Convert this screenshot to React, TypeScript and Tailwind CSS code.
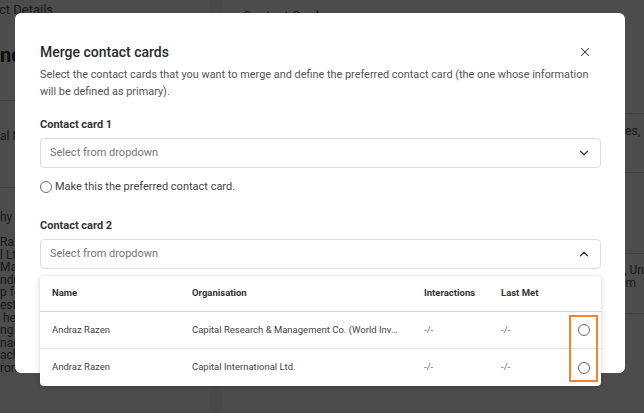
import { X, ChevronDown, ChevronUp } from 'lucide-react';

type Row = {
  name: string;
  organisation: string;
  interactions: string;
  lastMet: string;
};

const ROWS: Row[] = [
  {
    name: 'Andraz Razen',
    organisation: 'Capital Research & Management Co. (World Investors)',
    interactions: '-/-',
    lastMet: '-/-',
  },
  {
    name: 'Andraz Razen',
    organisation: 'Capital International Ltd.',
    interactions: '-/-',
    lastMet: '-/-',
  },
];

const BIO_LINES = ['Razen', 'l Ltd', 'Mark', 'ndu', 'p fo', 'est', ' he', 'ng t', 'nag', 'ach', 'rom Tufts'];

function Radio() {
  return <span className="inline-block h-[12px] w-[12px] shrink-0 rounded-full border-[1.3px] border-[#6b6b6b] bg-white" />;
}

function SelectBox({ open }: { open?: boolean }) {
  return (
    <div className="flex h-[30px] items-center justify-between rounded border border-[#dcdcdc] bg-white pl-[9px] pr-[9px]">
      <span className="text-[11px] text-[#757575]">Select from dropdown</span>
      {open ? (
        <ChevronUp size={14} strokeWidth={2.2} className="text-[#333]" />
      ) : (
        <ChevronDown size={14} strokeWidth={2.2} className="text-[#333]" />
      )}
    </div>
  );
}

function BackgroundPage() {
  return (
    <div className="flex h-full w-full bg-[#f3f3f3] text-[#555]">
      <div className="flex w-[210px] flex-col bg-white">
        <div className="-ml-[1px] h-[26px] text-[13px]">ct Details</div>
        <div className="h-[74px] pt-[14px] text-[20px] font-bold text-[#222]">ndraz Razen</div>
        <div className="h-[87px] border-t border-[#ddd] pt-[26px] text-[12px]">al Name</div>
        <div className="border-t border-[#ddd] pt-[20px]">
          <div className="text-[12px]">hy</div>
          <div className="mt-[10px] flex flex-col text-[12px] leading-[12.6px]">
            {BIO_LINES.map((l, i) => (
              <span key={i} className="whitespace-pre">
                {l}
              </span>
            ))}
          </div>
        </div>
      </div>
      <div className="w-[12px]" />
      <div className="flex flex-1 flex-col bg-white">
        <div className="h-[113px] pl-[21px] pt-[6px] text-[13px]">Contact Cards</div>
        <div className="flex h-[59px] items-center justify-end border-t border-[#ddd] pr-[4px] text-[12px]">
          <span className="mb-[25px]">Titles,</span>
        </div>
        <div className="h-[81px] border-t border-[#ddd]" />
        <div className="flex h-[60px] flex-col items-end border-t border-[#ddd] pt-[10px] text-[12px] leading-[13px]">
          <span>es, Un</span>
          <span className="pr-[8px]">m</span>
        </div>
        <div className="flex-1 border-t border-[#ddd]" />
      </div>
    </div>
  );
}

export default function App() {
  return (
    <div className="relative h-[413px] w-[644px] overflow-hidden font-['Roboto',sans-serif]">
      <BackgroundPage />
      <div className="absolute inset-0 bg-black/70" />

      <div className="absolute left-[15px] top-[13px] h-[360px] w-[610px] rounded-md bg-white pl-[25px] pr-[24px] pt-[29px] text-[#333]">
        <div className="flex items-center justify-between">
          <h2 className="text-[14px] font-medium leading-[20px] text-[#2b2b2b]">Merge contact cards</h2>
          <X size={14} strokeWidth={1.8} className="mr-[9px] text-[#333]" />
        </div>
        <p className="mt-[4px] max-w-[552px] text-[10.9px] leading-[17px] text-[#555]">
          Select the contact cards that you want to merge and define the preferred contact card (the one whose
          information will be defined as primary).
        </p>

        <div className="mt-[17px] text-[11px] font-bold leading-[16px] text-[#333]">Contact card 1</div>
        <div className="mt-[5px]">
          <SelectBox />
        </div>
        <div className="mt-[10px] flex h-[18px] items-center gap-[3px] text-[11px] text-[#444]">
          <Radio />
          <span>Make this the preferred contact card.</span>
        </div>

        <div className="mt-[22px] text-[11px] font-bold leading-[16px] text-[#333]">Contact card 2</div>
        <div className="relative mt-[5px]">
          <SelectBox open />

          <div className="absolute left-0 right-0 top-[37px] z-10 overflow-hidden rounded bg-white shadow-[0_1px_5px_rgba(0,0,0,0.2)]">
            <div className="grid h-[36px] grid-cols-[152px_232px_77px_1fr_38px] items-center border-b border-[#d6d6d6] text-[9.5px] font-bold text-[#333]">
              <span className="pl-[12px]">Name</span>
              <span>Organisation</span>
              <span>Interactions</span>
              <span>Last Met</span>
              <span />
            </div>
            {ROWS.map((row, i) => (
              <div
                key={i}
                className={`grid h-[37px] grid-cols-[152px_232px_77px_1fr_38px] items-center text-[9.5px] text-[#444] ${
                  i < ROWS.length - 1 ? 'border-b border-[#e2e2e2]' : ''
                }`}
              >
                <span className="pl-[12px]">{row.name}</span>
                <span className="truncate pr-[22px]">{row.organisation}</span>
                <span className="text-[#666]">{row.interactions}</span>
                <span className="text-[#666]">{row.lastMet}</span>
                <span className="flex justify-center pl-[4px]">
                  <Radio />
                </span>
              </div>
            ))}
            <div className="pointer-events-none absolute left-[529px] top-[39px] h-[67px] w-[29px] border-2 border-[#f5832b]" />
          </div>
        </div>
      </div>
    </div>
  );
}
